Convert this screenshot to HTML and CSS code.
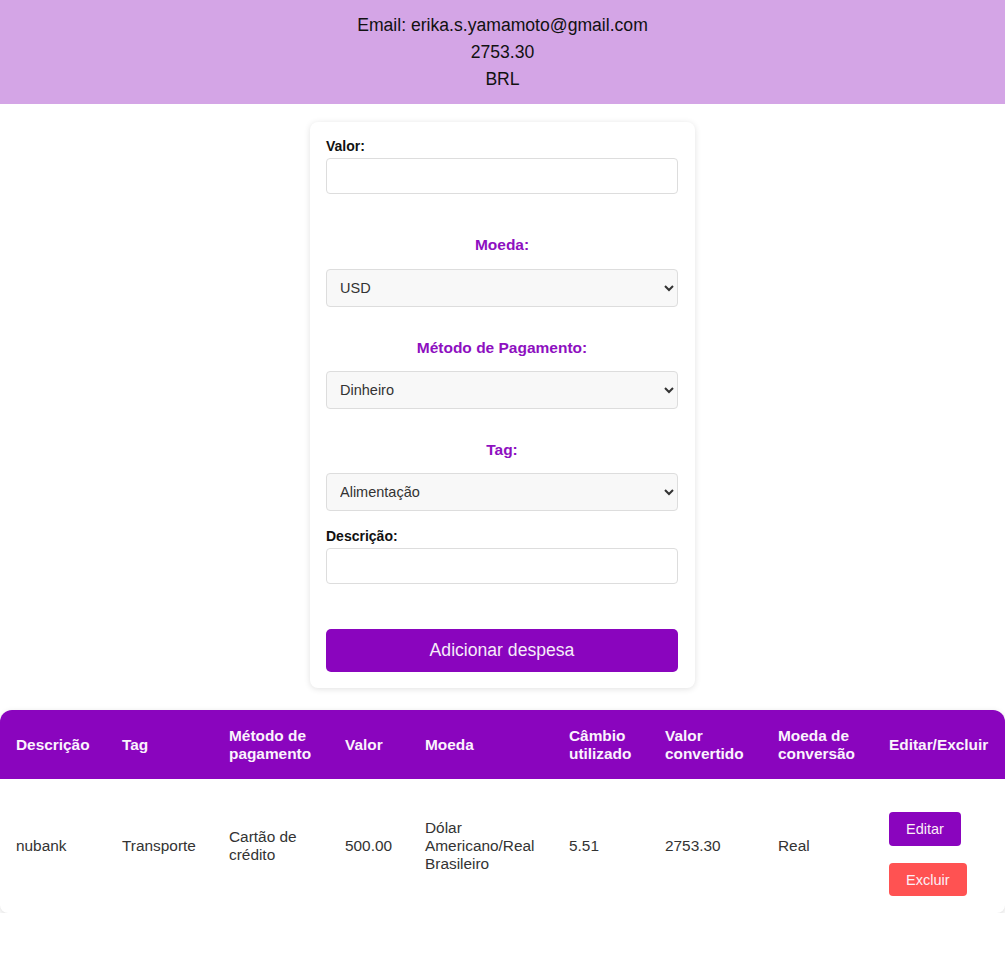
FILE: index.html
```html
<!DOCTYPE html>
<html lang="pt-BR">
<head>
<meta charset="utf-8">
<title>Carteira</title>
<link rel="stylesheet" href="styles.css">
</head>
<body>
<header class="top">
  <p>Email: erika.s.yamamoto@gmail.com</p>
  <p>2753.30</p>
  <p>BRL</p>
</header>
<main>
  <form class="card">
    <label class="lbl" for="valor">Valor:</label>
    <input class="field" id="valor" type="text">
    <div class="group first">
      <label class="plbl" for="moeda">Moeda:</label>
      <select class="sel" id="moeda"><option>USD</option></select>
    </div>
    <div class="group">
      <label class="plbl" for="metodo">Método de Pagamento:</label>
      <select class="sel" id="metodo"><option>Dinheiro</option></select>
    </div>
    <div class="group">
      <label class="plbl" for="tag">Tag:</label>
      <select class="sel" id="tag"><option>Alimentação</option></select>
    </div>
    <label class="lbl desc" for="descricao">Descrição:</label>
    <input class="field" id="descricao" type="text">
    <button class="add" type="button">Adicionar despesa</button>
  </form>
  <div class="tablewrap">
    <table class="tbl">
      <colgroup>
        <col class="c1"><col class="c2"><col class="c3"><col class="c4"><col class="c5"><col class="c6"><col class="c7"><col class="c8"><col class="c9">
      </colgroup>
      <thead>
        <tr>
          <th>Descrição</th>
          <th>Tag</th>
          <th>Método de pagamento</th>
          <th>Valor</th>
          <th>Moeda</th>
          <th>Câmbio utilizado</th>
          <th>Valor convertido</th>
          <th>Moeda de conversão</th>
          <th>Editar/Excluir</th>
        </tr>
      </thead>
      <tbody>
        <tr>
          <td>nubank</td>
          <td>Transporte</td>
          <td>Cartão de crédito</td>
          <td>500.00</td>
          <td>Dólar Americano/Real Brasileiro</td>
          <td>5.51</td>
          <td>2753.30</td>
          <td>Real</td>
          <td class="actions">
            <div class="btns">
              <button class="edit" type="button">Editar</button>
              <button class="del" type="button">Excluir</button>
            </div>
          </td>
        </tr>
      </tbody>
    </table>
  </div>
</main>
</body>
</html>
```

FILE: styles.css
```css
* { box-sizing: border-box; }
html, body { margin: 0; padding: 0; background: #fff; }
body { font-family: "Liberation Sans", Arial, sans-serif; color: #000; }

.top {
  background: #d4a5e6;
  text-align: center;
  padding: 12px 0 11px;
  font-size: 17.6px;
  line-height: 27px;
  color: #111;
}
.top p { margin: 0; }

.card {
  width: 385px;
  margin: 18px auto 0;
  padding: 16px 17px 16px 16px;
  background: #fff;
  border-radius: 8px;
  box-shadow: 0 1px 6px rgba(0,0,0,0.12);
  display: flex;
  flex-direction: column;
}
.lbl {
  display: block;
  font-size: 14px;
  font-weight: bold;
  line-height: 16px;
  margin-bottom: 4px;
  color: #111;
}
.lbl.desc { margin-top: 17px; }
.field {
  display: block;
  width: 100%;
  height: 36px;
  border: 1px solid #ddd;
  border-radius: 4px;
  background: #fff;
  font: 15px "Liberation Sans", Arial, sans-serif;
  padding: 0 12px;
}
.group { display: flex; flex-direction: column; margin-top: 32px; }
.group.first { margin-top: 42px; }
.plbl {
  text-align: center;
  color: #8e0fc0;
  font-size: 15.5px;
  font-weight: bold;
  line-height: 17px;
  margin-bottom: 15px;
}
.group.first .plbl { margin-bottom: 16px; }
.sel {
  height: 38px;
  width: 100%;
  border: 1px solid #ddd;
  border-radius: 4px;
  background-color: #f8f8f8;
  color: #333;
  font: 14.5px "Liberation Sans", Arial, sans-serif;
  padding: 0 9px;
}
.add {
  margin-top: 45px;
  height: 43px;
  width: 100%;
  border: none;
  border-radius: 5px;
  background: #8a05be;
  color: #f6ecf9;
  font: 17.6px "Liberation Sans", Arial, sans-serif;
}

.tablewrap {
  margin-top: 22px;
  border-radius: 12px 12px 8px 8px;
  box-shadow: 0 2px 6px rgba(0,0,0,0.14);
  overflow: hidden;
  background: #fff;
}
.tbl {
  width: 100%;
  border-collapse: collapse;
  table-layout: fixed;
  font-size: 15.4px;
  line-height: 18px;
}
.c1 { width: 106px; }
.c2 { width: 107px; }
.c3 { width: 116px; }
.c4 { width: 80px; }
.c5 { width: 144px; }
.c6 { width: 96px; }
.c7 { width: 113px; }
.c8 { width: 111px; }
.c9 { width: 132px; }
.tbl th {
  background: #8a05be;
  color: #fbf3fd;
  font-weight: bold;
  text-align: left;
  height: 69px;
  padding: 0 16px;
  vertical-align: middle;
}
.tbl td {
  color: #333;
  padding: 0 16px;
  height: 134px;
  vertical-align: middle;
}
.tbl td.actions { padding: 16px 16px 0; }
.btns { display: flex; flex-direction: column; align-items: flex-start; gap: 17px; }
.edit, .del {
  border: none;
  border-radius: 4px;
  color: #fbeff6;
  font: 14.5px "Liberation Sans", Arial, sans-serif;
  padding: 0 17px;
}
.edit { background: #8a05be; height: 34px; }
.del { background: #ff5252; height: 33px; }
```
